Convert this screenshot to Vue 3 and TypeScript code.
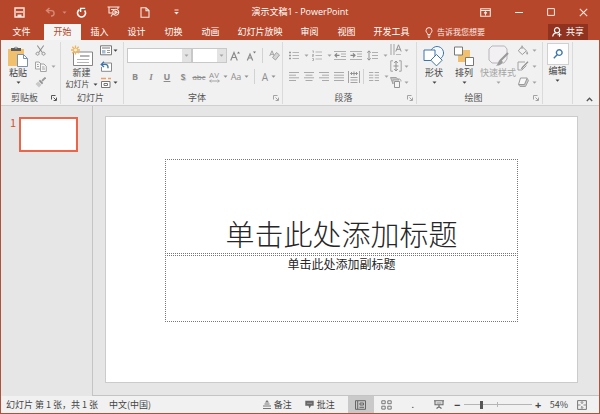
<script setup lang="ts">
import { h, ref } from 'vue'

type Shape = { d: string; f?: string; s?: string; w?: number }
type Glyph = { w: number; h: number; shapes: Shape[] }

const off = '#a3a3a3'
const ink = '#666'
const blue = '#3f74a8'
const pale = '#fbe9e4'

const glyphs: Record<string, Glyph> = {
  save: { w: 11, h: 11, shapes: [
    { d: 'M1 1h9v9H1z', s: pale, w: 1.4 },
    { d: 'M2 5h7', s: pale, w: 1.4 },
    { d: 'M3.5 7.5h4V10h-4z', f: pale },
  ] },
  undo: { w: 11, h: 10, shapes: [
    { d: 'M4.5 1L1.5 3.6l3 2.6M1.8 3.6h4.6a2.7 2.7 0 0 1 0 5.4H6', s: '#d58a76', w: 1.4 },
  ] },
  redo: { w: 11, h: 11, shapes: [
    { d: 'M3.4 2.6A4 4 0 1 0 8.6 3.4', s: '#fff', w: 1.6 },
    { d: 'M4.6 5V1.4h4.600', s: '#fff', w: 1.4 },
  ] },
  show: { w: 13, h: 12, shapes: [
    { d: 'M0.5 1h12M2 1v6h3M11 1v2M4 3.5h3M4 10.5l2-3', s: pale, w: 1.1 },
    { d: 'M8.7 3.2a3 3 0 1 0 .1 0zM8 4.9v2.8l2.2-1.4z', s: pale, w: 1.1 },
  ] },
  page: { w: 10, h: 11, shapes: [
    { d: 'M1 .7h5L9 3.6v6.7H1zM6 .7v3h3', s: pale, w: 1.1 },
  ] },
  more: { w: 5, h: 6, shapes: [
    { d: 'M.5 1h4', s: pale },
    { d: 'M.2 3h4.6L2.5 5.5z', f: pale },
  ] },
  ribbonmode: { w: 11, h: 9, shapes: [
    { d: 'M.7.7h9.6v7.6H.7zM.7 2.5h9.6', s: pale, w: 1.1 },
    { d: 'M5.5 7.4V4M4 5.4l1.5-1.5L7 5.4', s: pale, w: 1.1 },
  ] },
  min: { w: 8, h: 8, shapes: [{ d: 'M0 4.5h8', s: pale }] },
  max: { w: 8, h: 8, shapes: [{ d: 'M.6.6h6.8v6.8H.6z', s: pale }] },
  close: { w: 9, h: 9, shapes: [{ d: 'M.8.8l7.4 7.4M8.2.8L.8 8.2', s: pale, w: 1.1 }] },
  bulb: { w: 8, h: 11, shapes: [
    { d: 'M2.7 7.5C2.7 6 1 5.6 1 3.6a3 3 0 0 1 6 0c0 2-1.7 2.4-1.7 3.9zM2.7 9h2.6M3.2 10.4h1.6', s: pale },
  ] },
  person: { w: 10, h: 10, shapes: [
    { d: 'M5 .7a2.6 2.6 0 1 0 .1 0zM.7 9.5c.3-2.4 1.5-3.5 3.5-3.7', s: '#fff', w: 1.2 },
    { d: 'M5.5 7.7h4M7.5 5.7v4', s: '#fff', w: 1.1 },
  ] },
  caret: { w: 5, h: 3, shapes: [{ d: 'M.5 .4h4L2.5 2.7z', f: 'currentColor' }] },
  launch: { w: 6, h: 6, shapes: [
    { d: 'M.5 4.5v-4h4', s: 'currentColor' },
    { d: 'M2.5 2.5l2.5 2.5M5.5 2.6v2.9H2.6', s: 'currentColor' },
  ] },
  paste: { w: 22, h: 22, shapes: [
    { d: 'M1 4h16v17H1z', f: '#f1c06f' },
    { d: 'M4 3h3.2a2 2 0 0 1 3.6 0H14v3H4z', f: '#5c5c5c' },
    { d: 'M8.3 2.2h1.4v1.4H8.3z', f: '#f1f1f1' },
    { d: 'M10.5 9.5h6l4 4v8h-10z', f: '#fff', s: '#7991ad' },
    { d: 'M16.5 9.5v4h4', s: '#7991ad' },
  ] },
  cut: { w: 11, h: 11, shapes: [
    { d: 'M2.3 .5l5 7M8.7 .5l-5 7', s: '#8f8f8f', w: 1.1 },
    { d: 'M2.5 7.2a1.5 1.5 0 1 0 .1 0zM8.5 7.2a1.5 1.5 0 1 0 .1 0z', s: '#8f8f8f' },
  ] },
  copy: { w: 12, h: 11, shapes: [
    { d: 'M.5 1h3.5l2 2v5H.5z', f: '#f7f7f7', s: off },
    { d: 'M5.5 3h3.5l2.3 2.3v5.2H5.5z', f: '#f7f7f7', s: off },
    { d: 'M2 3.5h1.5M2 5.5h2M7 6h2.5M7 8h3', s: off },
  ] },
  brush: { w: 11, h: 11, shapes: [
    { d: 'M10.5 .5L7 4', s: '#9a9a9a', w: 1.8 },
    { d: 'M5 2.8l3.2 3.2-1.2 1.2L3.8 4z', f: '#8d8d8d' },
    { d: 'M3.2 4.5L6.5 7.8 4 10.5 .5 7z', f: '#c9c9c9' },
  ] },
  newslide: { w: 22, h: 21, shapes: [
    { d: 'M2.5 6.5h19v13.5h-19z', f: '#fff', s: '#858585' },
    { d: 'M9 10.5h9.5', s: '#b5b5b5', w: 2 },
    { d: 'M6 14h12M6 17h12', s: '#b5b5b5' },
    { d: 'M4.5 0v9M0 4.5h9M1.3 1.3l6.4 6.4M7.7 1.3L1.3 7.7', s: '#f0b45c', w: 1.3 },
    { d: 'M4.5 3a1.5 1.5 0 1 0 .1 0z', f: '#fff3dc' },
  ] },
  layout: { w: 12, h: 11, shapes: [
    { d: 'M.5 .8h11v9H.5z', f: '#fff', s: '#777' },
    { d: 'M2 3h8', s: '#777' },
    { d: 'M2 5h3.5v3.5H2z', f: '#a9bdd2' },
    { d: 'M7 5.5h3M7 7.5h3', s: '#999' },
  ] },
  reset: { w: 12, h: 11, shapes: [
    { d: 'M4 2h7.5v8.3H1.5V6', f: '#fff', s: '#8a8a8a' },
    { d: 'M4 .7L1.3 3.4 4 6M1.6 3.4h3.6c2.2 0 3 1.5 2.8 3.8', s: blue, w: 1.4 },
  ] },
  section: { w: 12, h: 11, shapes: [
    { d: 'M1 1.5h5M8 1.5h3', s: '#ee9d66', w: 1.5 },
    { d: 'M1.5 4.5h8.5v6H1.5z', f: '#fff', s: '#777' },
    { d: 'M4 6.5h3.5v2H4z', s: '#777' },
  ] },
  grow: { w: 10, h: 10, shapes: [{ d: 'M.7 9.5L4 1.5 7.3 9.5M2 6.5h4', s: '#8b8b8b', w: 1.2 }, { d: 'M7 2.5L8.5 .5 10 2.5z', f: '#777' }] },
  shrink: { w: 10, h: 10, shapes: [{ d: 'M1.3 9.5L4 3 6.7 9.5M2.3 7h3.4', s: '#8b8b8b', w: 1.2 }, { d: 'M7 .5h3L8.5 2.5z', f: '#777' }] },
  erase: { w: 11, h: 11, shapes: [
    { d: 'M.7 6L3 .8 5.2 6M1.5 4.3h3', s: off },
    { d: 'M7.5 2.5L10.5 5 6.5 10 3.5 7.5z', f: '#d5d5d5', s: off },
  ] },
  spacing: { w: 11, h: 4, shapes: [{ d: 'M.7 2h9.6M2.2 .5L.7 2l1.5 1.5M8.8 .5L10.3 2 8.8 3.5', s: off }] },
  bullets: { w: 10, h: 9, shapes: [{ d: 'M0 1.5h2M0 4.5h2M0 7.5h2', s: '#999', w: 1.3 }, { d: 'M3.5 1.5H10M3.5 4.5H10M3.5 7.5H10', s: '#b5b5b5' }] },
  numbers: { w: 10, h: 11, shapes: [{ d: 'M.5 .8h.8v2M.3 4.5h1.2v1H.5v1h1M.3 8.5h1.2v2H.3', s: '#999', w: .8 }, { d: 'M3.5 2H10M3.5 5.5H10M3.5 9H10', s: '#b5b5b5' }] },
  outdent: { w: 12, h: 9, shapes: [{ d: 'M0 .5h12M7 3h5M7 5.5h5M0 8.5h12', s: '#b0b0b0' }, { d: 'M5.5 4.3H1M3 2.3l-2 2 2 2', s: '#858585', w: 1.2 }] },
  indent: { w: 12, h: 9, shapes: [{ d: 'M0 .5h12M7 3h5M7 5.5h5M0 8.5h12', s: '#b0b0b0' }, { d: 'M.5 4.3H5M3 2.3l2 2-2 2', s: '#858585', w: 1.2 }] },
  leading: { w: 11, h: 11, shapes: [{ d: 'M2 1v9M.3 2.7L2 .8l1.7 1.9M.3 8.3L2 10.2l1.7-1.9', s: '#929292' }, { d: 'M5 2.5h6M5 5.5h6M5 8.5h6', s: '#b0b0b0' }] },
  left: { w: 10, h: 9, shapes: [{ d: 'M0 .5h10M0 3.2h7M0 5.8h10M0 8.5h7', s: '#aaa' }] },
  center: { w: 10, h: 9, shapes: [{ d: 'M0 .5h10M1.5 3.2h7M0 5.8h10M1.5 8.5h7', s: '#aaa' }] },
  right: { w: 10, h: 9, shapes: [{ d: 'M0 .5h10M3 3.2h7M0 5.8h10M3 8.5h7', s: '#aaa' }] },
  justify: { w: 10, h: 9, shapes: [{ d: 'M0 .5h10M0 3.2h10M0 5.8h10M0 8.5h10', s: '#aaa' }] },
  spread: { w: 12, h: 12, shapes: [{ d: 'M.5 0v12M11.5 0v12M2.5 6.5h7M2.5 9h7M2.5 11.5h7', s: off }, { d: 'M2.5 2.5h7M4 1L2.5 2.5 4 4M8 1l1.5 1.5L8 4M6 .5v4', s: '#929292' }] },
  columns: { w: 10, h: 9, shapes: [{ d: 'M0 .5h4.3M0 3.2h4.3M0 5.8h4.3M0 8.5h4.3M5.7 .5H10M5.7 3.2H10M5.7 5.8H10M5.7 8.5H10', s: '#aaa' }] },
  textdir: { w: 12, h: 12, shapes: [{ d: 'M1 0v11M4 0v11', s: off }, { d: 'M5.8 7.5L8.5 .8 11.2 7.5M6.8 5.3h3.4', s: '#929292' }, { d: 'M6 10.5h5', s: '#bbb' }] },
  valign: { w: 12, h: 12, shapes: [{ d: 'M3 .8H.8v10.4H3M9 .8h2.2v10.4H9', s: off }, { d: 'M6 1v10M4.2 3L6 1l1.8 2M4.2 9L6 11l1.8-2M3.5 6h5', s: '#929292' }] },
  smart: { w: 12, h: 12, shapes: [{ d: 'M.5 1.5h5.5l3 2.5H3v4z', f: '#c4c4c4', s: off }, { d: 'M4.5 5.5h5v6h-5z', f: '#f4f4f4', s: '#939393' }, { d: 'M8 3h1c1.5 0 2 1 2 2.5', s: off }] },
  shapes: { w: 22, h: 22, shapes: [
    { d: 'M14 1.5a6.5 6.5 0 1 0 .1 0z', f: '#f5f9fc', s: blue },
    { d: 'M1 5h11v10.5H1z', f: '#fff', s: blue },
    { d: 'M13.5 9.5l5.7 5.7-5.7 5.7-5.7-5.7z', f: '#fff', s: blue },
  ] },
  arrange: { w: 20, h: 20, shapes: [
    { d: 'M4 4h12v12H4z', f: '#f1c06f' },
    { d: 'M.5 1h8v8h-8zM11.5 11.5h8v8h-8z', f: '#fff', s: '#777' },
  ] },
  styles: { w: 21, h: 22, shapes: [
    { d: 'M4 1h12.5l2.5 3v10l-3 4H4L1 15V4z', f: '#f3f0f4', s: '#b9b3ba' },
    { d: 'M20 8l-7.5 7.5', s: '#999', w: 2.2 },
    { d: 'M12.5 14.5l2.3 2.3c-1 3.5-4.5 4-7 4 2.5-1.2 2-5 4.7-6.3z', f: '#9b9b9b' },
  ] },
  fill: { w: 12, h: 11, shapes: [
    { d: 'M5 1.5l4.5 4.3L5.3 9.5 1.3 5.8zM5 4V.5', f: '#f2f2f2', s: '#999' },
    { d: 'M10 6c1.5 2 1.5 3.5 .2 3.5S8.8 8 10 6z', f: off },
  ] },
  outline: { w: 12, h: 10, shapes: [
    { d: 'M8 1H1v8h4l4.5-4.5', s: off },
    { d: 'M11 .8L5.5 6.3 4.5 8', s: '#8f8f8f', w: 1.3 },
  ] },
  effects: { w: 12, h: 10, shapes: [
    { d: 'M1.5 7.5l1.5 2h5.5l3-6-1.3-2', f: '#c7c7c7', s: off },
    { d: 'M3.5 1h6.7L7.5 7.5h-6z', f: '#f8f8f8', s: '#999' },
  ] },
  find: { w: 10, h: 10, shapes: [{ d: 'M6.2 .8a2.8 2.8 0 1 0 .1 0zM4.2 5.7L.8 9.2', s: blue, w: 1.4 }] },
  collapse: { w: 7, h: 5, shapes: [{ d: 'M.8 4l2.7-2.8L6.2 4', s: '#555', w: 1.3 }] },
  notes: { w: 8, h: 9, shapes: [{ d: 'M4 0l2 2.5H2z', f: '#777' }, { d: 'M1.5 4h5M0 6h8M0 8.5h8', s: '#777' }] },
  comments: { w: 9, h: 9, shapes: [{ d: 'M.3 .8h8.4v5H6L4.5 8.6 3.5 5.8H.3z', f: '#686868' }, { d: 'M2 3.3h5', s: '#999' }] },
  normal: { w: 11, h: 10, shapes: [{ d: 'M.5 .7h10v8.6H.5zM2.7 1v8M5 3h3.5v2H5zM4.5 7.3H9', s: ink }] },
  sorter: { w: 11, h: 10, shapes: [{ d: 'M.8 .8h3.4v2.9H.8zM6.8 .8h3.4v2.9H6.8zM.8 6.2h3.4v2.9H.8zM6.8 6.2h3.4v2.9H6.8z', s: '#777' }] },
  present: { w: 10, h: 9, shapes: [{ d: 'M0 .7h10M1 1v3.8h8V1M5 5v2M2.5 8.5L5 6.7l2.5 1.8', s: ink, w: 1.1 }, { d: 'M2.5 3h5', s: '#888' }] },
  fit: { w: 10, h: 10, shapes: [{ d: 'M.6 .6h8.8v8.8H.6z', s: '#777' }, { d: 'M5 0v3.5M5 6.5V10M0 5h3.5M6.5 5H10M3.8 2.3L5 3.5l1.2-1.2M3.8 7.7L5 6.5l1.2 1.2', s: '#888' }] },
}

const Icon = (props: { name: string }) => {
  const g = glyphs[props.name]
  return h('svg', { class: 'icon', width: g.w, height: g.h, viewBox: `0 0 ${g.w} ${g.h}`, 'aria-hidden': 'true' },
    g.shapes.map(p => h('path', { d: p.d, fill: p.f ?? 'none', stroke: p.s ?? 'none', 'stroke-width': p.w ?? 1 })))
}
Icon.props = ['name']

const tabs = [
  { label: '文件', size: 'file' }, { label: '开始', size: '' }, { label: '插入', size: '' },
  { label: '设计', size: '' }, { label: '切换', size: '' }, { label: '动画', size: '' },
  { label: '幻灯片放映', size: 'long' }, { label: '审阅', size: '' }, { label: '视图', size: '' },
  { label: '开发工具', size: 'medium' },
]
const active = ref('开始')
const zoom = ref(54)
const aligns = ['left', 'center', 'right', 'justify', 'spread']
</script>

<template>
  <div class="window">
    <header class="chrome">
      <div class="titlebar">
        <div class="quick">
          <button><Icon name="save" /></button>
          <button class="split dim"><Icon name="undo" /><Icon name="caret" /></button>
          <button><Icon name="redo" /></button>
          <button><Icon name="show" /></button>
          <button><Icon name="page" /></button>
          <button class="customize"><Icon name="more" /></button>
        </div>
        <div class="caption">演示文稿1 - PowerPoint</div>
        <div class="system">
          <button><Icon name="ribbonmode" /></button>
          <button><Icon name="min" /></button>
          <button><Icon name="max" /></button>
          <button><Icon name="close" /></button>
        </div>
      </div>
      <nav class="tabs">
        <button v-for="t in tabs" :key="t.label" class="tab" :class="[t.size, { active: active === t.label }]" @click="active = t.label">{{ t.label }}</button>
        <button class="tell"><Icon name="bulb" />告诉我您想要</button>
        <button class="share"><Icon name="person" />共享</button>
      </nav>
    </header>

    <section class="ribbon">
      <div class="group clipboard">
        <div class="tools">
          <button class="big"><Icon name="paste" /><span>粘贴</span><Icon name="caret" /></button>
          <div class="stack">
            <button class="split faint"><Icon name="cut" /></button>
            <button class="split faint"><Icon name="copy" /><Icon name="caret" /></button>
            <button class="split faint"><Icon name="brush" /></button>
          </div>
        </div>
        <div class="name"><span>剪贴板</span><button><Icon name="launch" /></button></div>
      </div>

      <div class="group slides">
        <div class="tools">
          <button class="big"><Icon name="newslide" /><span>新建</span><span class="line">幻灯片<Icon name="caret" /></span></button>
          <div class="stack">
            <button class="split"><Icon name="layout" /><Icon name="caret" /></button>
            <button class="split"><Icon name="reset" /></button>
            <button class="split"><Icon name="section" /><Icon name="caret" /></button>
          </div>
        </div>
        <div class="name"><span>幻灯片</span></div>
      </div>

      <div class="group font">
        <div class="rows">
          <div class="row">
            <label class="combo family"><select aria-label="字体"><option></option></select><span><Icon name="caret" /></span></label>
            <label class="combo size"><select aria-label="字号"><option></option></select><span><Icon name="caret" /></span></label>
            <button class="key"><Icon name="grow" /></button>
            <button class="key"><Icon name="shrink" /></button>
            <i class="rule"></i>
            <button class="key"><Icon name="erase" /></button>
          </div>
          <div class="row">
            <button class="key bold">B</button>
            <button class="key italic">I</button>
            <button class="key under">U</button>
            <button class="key shadow">S</button>
            <button class="key strike">abc</button>
            <button class="split letters"><span class="kern">AV<Icon name="spacing" /></span><Icon name="caret" /></button>
            <button class="split letters">Aa<Icon name="caret" /></button>
            <i class="rule"></i>
            <button class="split letters color">A<Icon name="caret" /></button>
          </div>
        </div>
        <div class="name"><span>字体</span><button class="faint"><Icon name="launch" /></button></div>
      </div>

      <div class="group paragraph">
        <div class="tools">
          <div class="rows">
            <div class="row">
              <button class="split faint"><Icon name="bullets" /><Icon name="caret" /></button>
              <button class="split faint"><Icon name="numbers" /><Icon name="caret" /></button>
              <button class="key"><Icon name="outdent" /></button>
              <button class="key"><Icon name="indent" /></button>
              <button class="split faint"><Icon name="leading" /><Icon name="caret" /></button>
            </div>
            <div class="row">
              <button v-for="a in aligns" :key="a" class="key align"><Icon :name="a" /></button>
              <i class="rule"></i>
              <button class="split faint"><Icon name="columns" /><Icon name="caret" /></button>
            </div>
          </div>
          <div class="stack">
            <button class="split faint"><Icon name="textdir" /><Icon name="caret" /></button>
            <button class="split faint"><Icon name="valign" /><Icon name="caret" /></button>
            <button class="split faint"><Icon name="smart" /><Icon name="caret" /></button>
          </div>
        </div>
        <div class="name"><span>段落</span><button class="faint"><Icon name="launch" /></button></div>
      </div>

      <div class="group drawing">
        <div class="tools">
          <button class="big"><Icon name="shapes" /><span>形状</span><Icon name="caret" /></button>
          <button class="big"><Icon name="arrange" /><span>排列</span><Icon name="caret" /></button>
          <button class="big wide faint"><Icon name="styles" /><span>快速样式</span><Icon name="caret" /></button>
          <div class="stack">
            <button class="split faint"><Icon name="fill" /><Icon name="caret" /></button>
            <button class="split faint"><Icon name="outline" /><Icon name="caret" /></button>
            <button class="split faint"><Icon name="effects" /><Icon name="caret" /></button>
          </div>
        </div>
        <div class="name"><span>绘图</span><button class="faint"><Icon name="launch" /></button></div>
      </div>

      <div class="group editing">
        <button class="big"><span class="tile"><Icon name="find" /></span><span>编辑</span><Icon name="caret" /></button>
      </div>
      <button class="collapse"><Icon name="collapse" /></button>
    </section>

    <main class="work">
      <aside class="thumbs">
        <span>1</span>
        <button class="thumb" aria-label="1"></button>
      </aside>
      <div class="stage">
        <article class="slide">
          <div class="holder title"><h1>单击此处添加标题</h1></div>
          <div class="holder sub"><p>单击此处添加副标题</p></div>
        </article>
      </div>
    </main>

    <footer class="status">
      <span>幻灯片 第 1 张，共 1 张</span>
      <span class="lang">中文(中国)</span>
      <div class="right">
        <button class="notes"><Icon name="notes" />备注</button>
        <button class="notes"><Icon name="comments" />批注</button>
        <div class="views">
          <button class="view on"><Icon name="normal" /></button>
          <button class="view"><Icon name="sorter" /></button>
          <button class="view">.</button>
          <button class="view"><Icon name="present" /></button>
        </div>
        <div class="zoom">
          <button class="step">−</button>
          <input v-model.number="zoom" type="range" min="10" max="190" aria-label="缩放">
          <button class="step">+</button>
          <output>{{ zoom }}%</output>
          <button><Icon name="fit" /></button>
        </div>
      </div>
    </footer>
  </div>
</template>

<style>
body { margin: 0; }
</style>

<style scoped>
* { box-sizing: border-box; }
.window {
  display: flex; flex-direction: column; min-height: 100vh;
  border: 1px solid #b0523a; border-top: 0; background: #e6e6e6; color: #444;
  font: 9px/12px "Noto Sans CJK SC", "Noto Sans", sans-serif;
}
button { display: flex; align-items: center; justify-content: center; margin: 0; padding: 0; border: 0; background: none; color: inherit; font: inherit; white-space: nowrap; }
.icon { display: block; flex: none; }

.chrome { background: #b7472a; color: #fff; margin: 0 -1px; padding: 0 1px; }
.titlebar { display: grid; grid-template-columns: 1fr auto 1fr; align-items: center; height: 24px; }
.quick { display: flex; align-items: center; gap: 20px; padding-left: 13px; }
.quick .split { margin-right: -11px; gap: 6px; }
.customize { margin-left: 4px; }
.dim { color: #d58a76; }
.caption { font-family: "Open Sans", "Noto Sans CJK SC", sans-serif; }
.system { display: flex; justify-content: flex-end; align-items: center; gap: 24px; padding-right: 11px; }
.tabs { display: flex; height: 16px; padding-left: 2px; }
.tab { width: 37px; color: #fff; }
.tab.file { width: 41px; padding-right: 4px; }
.tab.long { width: 62px; }
.tab.medium { width: 53px; }
.tab.active { background: #f5f5f5; color: #b7472a; }
.tell { gap: 4px; margin-left: 7px; font-size: 8px; color: #fbe9e4; }
.share { gap: 4px; width: 40px; margin: 0 11px 0 auto; background: #8f3320; }

.ribbon { display: flex; background: #f1f1f1; border-bottom: 1px solid #cfcfcf; padding: 2px 0 1px; }
.group { display: flex; flex-direction: column; justify-content: space-between; flex: none; border-right: 1px solid #dadada; height: 62px; }
.clipboard { width: 60px; }
.slides { width: 63px; }
.font { width: 159px; }
.paragraph { width: 134px; }
.drawing { width: 126px; }
.editing { width: 30px; }
.tools { display: flex; }
.name { display: flex; align-items: center; height: 13px; padding-right: 3px; color: #555; }
.name span { flex: 1; padding-right: 3px; text-align: center; }
.slides .name { padding-right: 0; }
.faint { color: #a3a3a3; }

.big { flex-direction: column; justify-content: flex-start; width: 34px; padding-top: 3px; line-height: 10px; color: #444; }
.big > .icon:first-child { height: 22px; }
.big span + .icon { margin-top: 3px; }
.big > span:not(.tile) { margin-top: 1px; }
.big.faint { color: #a3a3a3; }
.big .line { display: flex; align-items: center; gap: 3px; font-size: 8px; margin: 0; }
.big .line .icon { margin: 0; }
.stack { display: grid; grid-template-rows: repeat(3, 16px); }
.split { justify-content: flex-start; gap: 4px; }
.slides .big { width: 37px; margin-left: 2px; }
.slides .split { gap: 1px; }
.drawing .big { width: 30px; margin-left: 2px; }
.drawing .big + .big { margin-left: 0; }
.drawing .big.wide { width: 38px; }
.drawing .split { gap: 3px; }

.rows { display: grid; grid-template-rows: 15px 15px; gap: 6px; padding: 6px 0 0 3px; }
.row { display: flex; align-items: center; }
.row .key { width: 16px; height: 15px; color: #8b8b8b; font: 9px/12px "Open Sans", sans-serif; }
.rule { width: 1px; height: 15px; margin: 0 3px; background: #d2d2d2; }
.combo { display: flex; height: 15px; border: 1px solid #c8c8c8; background: #fff; }
.combo select { flex: 1; min-width: 0; appearance: none; border: 0; background: transparent; }
.combo span { display: flex; align-items: center; justify-content: center; width: 9px; background: #e3e3e3; color: #a3a3a3; }
.family { width: 65px; }
.size { width: 35px; }
.row .bold { font-weight: 700; }
.row .italic { font-family: "Liberation Serif", serif; font-style: italic; font-weight: 700; }
.row .under { font-weight: 700; text-decoration: underline; }
.row .shadow { font-weight: 700; text-shadow: 1px 1px #ccc; }
.row .strike { font-size: 8px; text-decoration: line-through; }
.letters { width: 22px; gap: 3px; color: #8f8f8f; font: 9px/12px "Open Sans", sans-serif; justify-content: center; }
.kern { line-height: 8px; font-size: 8px; }
.color { font-size: 10px; }
.paragraph .row .split { width: 23px; gap: 5px; padding-left: 3px; }
.paragraph .row .align { width: 15px; }
.paragraph .stack { margin-left: 1px; }
.paragraph .stack .split { gap: 2px; }
.paragraph .rule { margin: 0 2px; }

.editing .big { width: 29px; padding-top: 1px; }
.tile { display: flex; align-items: center; justify-content: center; width: 22px; height: 22px; border: 1px solid #d0d0d0; background: #fdfdfd; }
.big .tile .icon { margin: 0; }
.collapse { align-self: flex-end; margin: 0 6px 2px auto; }

.work { display: flex; flex: 1; }
.thumbs { display: flex; align-items: flex-start; gap: 3px; width: 92px; padding: 11px 0 0 9px; border-right: 1px solid #c4c4c4; color: #d35230; font-size: 11px; line-height: 10px; }
.thumb { width: 59px; aspect-ratio: 59 / 35; border: 2px solid #e8664a; background: #fff; }
.stage { flex: 1; padding: 10px 21px 12px 12px; border-bottom: 1px solid #c4c4c4; }
.slide { display: grid; grid-template-rows: 95px 67px; gap: 1px; align-content: start; aspect-ratio: 473 / 267; padding: 42px 12.5%; border: 1px solid #cbcbcb; background: #fff; }
.holder { border: 1px dotted #777; text-align: center; color: #262626; }
.title { display: flex; align-items: flex-end; justify-content: center; }
h1 { margin: 0; font-size: 29px; font-weight: 300; line-height: 40px; white-space: nowrap; }
p { margin: 0; font-size: 12px; line-height: 16px; }

.status { display: flex; align-items: center; height: 17px; padding-left: 5px; background: #f1f1f1; }
.lang { margin-left: 11px; }
.right { display: flex; align-items: center; height: 100%; margin-left: auto; }
.notes { gap: 3px; margin-right: 13px; }
.views { display: flex; height: 100%; }
.view { width: 26px; }
.view.on { background: #c9c9c9; }
.zoom { display: flex; align-items: center; gap: 3px; padding: 0 12px 0 2px; }
.step { width: 7px; font: 700 11px/12px "Open Sans", sans-serif; }
.zoom output { margin: 0 6px 0 5px; }
input { appearance: none; width: 68px; height: 10px; margin: 0; background: linear-gradient(#b5b5b5, #b5b5b5) center / 1px 5px no-repeat, linear-gradient(#b5b5b5, #b5b5b5) center / 100% 1px no-repeat; }
input::-webkit-slider-thumb { appearance: none; width: 3px; height: 8px; background: #555; }
</style>
